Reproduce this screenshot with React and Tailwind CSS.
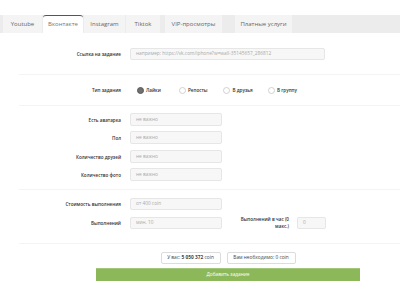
import React from "react";

const tabs = [
  { name: "Youtube", cls: "w-[39px]" },
  { name: "Вконтакте", cls: "w-[40px] ml-[1px]", active: true },
  { name: "Instagram", cls: "w-[41px] ml-[1px]" },
  { name: "Tiktok", cls: "w-[34px] ml-[1px]" },
  { name: "VIP-просмотры", cls: "w-[57px] ml-[5px]" },
  { name: "Платные услуги", cls: "w-[57px] ml-[13px]" },
];

const Field = ({ placeholder, className = "w-[92px]" }) => (
  <div
    className={`${className} h-full bg-[#f7f7f7] border border-[#e6e6e6] rounded-[2px] flex items-center pl-[5px] text-[4.8px] text-[#aaa] whitespace-nowrap overflow-hidden`}
  >
    {placeholder}
  </div>
);

const Row = ({ label, children, className = "" }) => (
  <div className={`flex items-center ${className}`}>
    <div className="w-[121px] text-right text-[4.6px] font-semibold text-[#333] leading-[6px]">
      {label}
    </div>
    <div className="ml-[9px] flex items-center h-full">{children}</div>
  </div>
);

const Radio = ({ label, checked, className }) => (
  <div className={`flex items-center ${className}`}>
    <span
      className={
        checked
          ? "w-[7px] h-[7px] rounded-full bg-[#6f6f6f] border border-[#5a5a5a]"
          : "w-[7px] h-[7px] rounded-full bg-white border border-[#d0d0d0]"
      }
    />
    <span className="ml-[2.5px] text-[4.6px] font-semibold text-[#333]">{label}</span>
  </div>
);

const Divider = ({ className }) => (
  <div className={`ml-[19px] h-px bg-[#f4f4f4] ${className}`} />
);

export default function App() {
  return (
    <div className="w-[400px] h-[300px] bg-white overflow-hidden font-['Open_Sans',sans-serif]">
      <div className="mt-[15px] h-[18px] bg-[#ececec] flex pl-[3px]">
        {tabs.map((t) => (
          <div
            key={t.name}
            className={`${t.cls} h-full flex items-center justify-center text-[6px] ${
              t.active
                ? "bg-white border-t border-[#555] rounded-t-[3px] text-[#777]"
                : "bg-[#f4f4f4] text-[#666]"
            }`}
          >
            {t.name}
          </div>
        ))}
      </div>

      <Row label="Ссылка на задание" className="mt-[15px] h-[12px]">
        <Field
          className="w-[195px]"
          placeholder="например: https://vk.com/iphone?w=wall-35145657_286812"
        />
      </Row>

      <Divider className="mt-[14px]" />

      <Row label="Тип задания" className="mt-[10px] h-[10px]">
        <div className="flex items-center pl-[6.5px]">
          <Radio label="Лайки" checked className="w-[42px]" />
          <Radio label="Репосты" className="w-[44.5px]" />
          <Radio label="В друзья" className="w-[44.5px]" />
          <Radio label="В группу" />
        </div>
      </Row>

      <Divider className="mt-[10px]" />

      <Row label="Есть аватарка" className="mt-[7px] h-[13px]">
        <Field placeholder="не важно" />
      </Row>
      <Row label="Пол" className="mt-[5px] h-[13px]">
        <Field placeholder="не важно" />
      </Row>
      <Row label="Количество друзей" className="mt-[6px] h-[13px]">
        <Field placeholder="не важно" />
      </Row>
      <Row label="Количество фото" className="mt-[5px] h-[13px]">
        <Field placeholder="не важно" />
      </Row>

      <Divider className="mt-[8px]" />

      <Row label="Стоимость выполнения" className="mt-[8px] h-[12px]">
        <Field placeholder="от 400 coin" />
      </Row>
      <Row label="Выполнений" className="mt-[7px] h-[12px]">
        <Field placeholder="мин. 10" />
        <div className="w-[58px] ml-[9px] text-right text-[4.6px] font-semibold text-[#333] leading-[7px]">
          Выполнений в час (0 макс.)
        </div>
        <Field placeholder="0" className="w-[29px] ml-[8px]" />
      </Row>

      <Divider className="mt-[14px]" />

      <div className="mt-[8px] ml-[96px] w-[264px] flex flex-col items-center">
        <div className="flex h-[12px] gap-[6px]">
          <div className="w-[60px] h-full border border-[#dcdcdc] rounded-[2px] bg-white flex items-center justify-center text-[4.8px] text-[#444] whitespace-nowrap">
            У вас:&nbsp;<b>5 050 372</b>&nbsp;coin
          </div>
          <div className="w-[69px] h-full border border-[#dcdcdc] rounded-[2px] bg-white flex items-center justify-center text-[4.8px] text-[#444] whitespace-nowrap">
            Вам необходимо: 0 coin
          </div>
        </div>
        <div className="mt-[4px] w-full h-[13px] bg-[#8db85a] border-t border-[#a3c77a] flex items-center justify-center text-[4.8px] text-white">
          Добавить задание
        </div>
      </div>
    </div>
  );
}
